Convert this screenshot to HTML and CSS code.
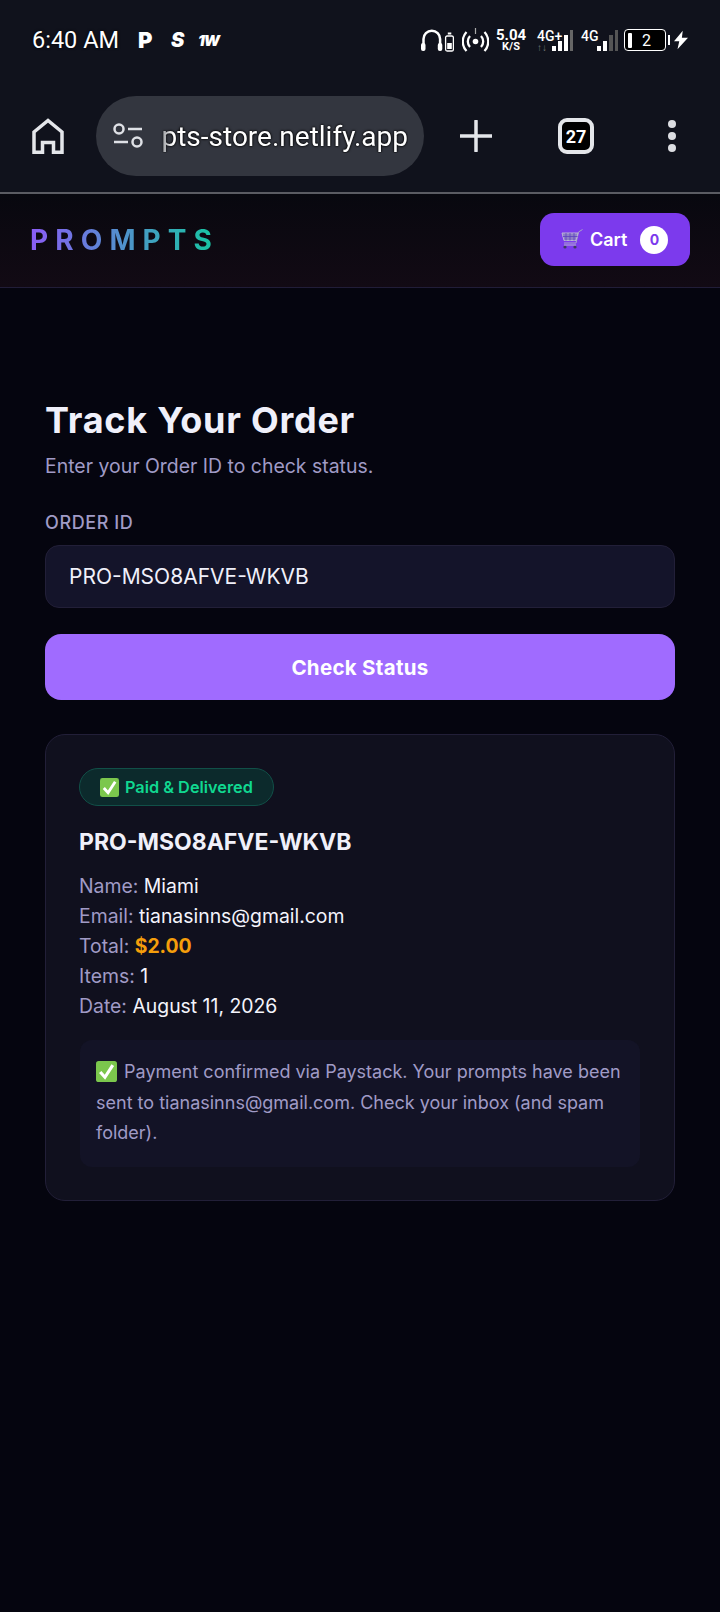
FILE: index.html
```html
<!DOCTYPE html>
<html>
<head>
	<meta name="viewport" content="width=device-width, initial-scale=1.0">
	<title>Track Your Order</title>
	<link rel="stylesheet" href="styles.css">
</head>
<body>
	<div class="phone-top">
		<div class="statusbar">
			<div class="status-left">
				<span class="time">6:40 AM</span>
				<span class="app-p">P</span>
				<span class="app-s">S</span>
				<span class="app-w">1W</span>
			</div>
			<div class="status-right">
				<svg class="ic" width="33" height="24" viewBox="0 0 33 24">
					<path d="M2.500 19V11a8.300 8.300 0 0 1 16.600 0v8" fill="none" stroke="#fff" stroke-width="2.500"/>
					<rect x="0" y="15" width="4.500" height="8" rx="2" fill="#fff"/>
					<rect x="16.800" y="15" width="4.500" height="8" rx="2" fill="#fff"/>
					<rect x="24.600" y="8" width="7.800" height="15" rx="1.500" fill="none" stroke="#fff" stroke-width="1.300"/>
					<rect x="26.800" y="4.500" width="3.500" height="2" fill="#fff"/>
					<rect x="26.200" y="15" width="4.600" height="6" fill="#fff"/>
				</svg>
				<svg class="ic hot" width="27" height="26" viewBox="0 0 27 26">
					<circle cx="13.500" cy="14.500" r="2.800" fill="#fff"/>
					<path d="M8 9a8 8 0 0 0 0 11M19 9a8 8 0 0 1 0 11M4.500 5a14 14 0 0 0 0 19M22.500 5a14 14 0 0 1 0 19" fill="none" stroke="#fff" stroke-width="2.300"/>
					<path d="M13.500 1v6" stroke="#aaa" stroke-width="1.200"/>
				</svg>
				<div class="speed"><span>5.04</span><span class="unit">K/S</span></div>
				<div class="net net-plus">
					<div class="net-text"><span>4G+</span><span class="arrows">↑↓</span></div>
					<svg width="21" height="21" viewBox="0 0 21 21">
						<rect x="0" y="16" width="4" height="5" fill="#fff"/>
						<rect x="6" y="11" width="4" height="10" fill="#fff"/>
						<rect x="12" y="5" width="4" height="16" fill="#fff"/>
						<rect x="18" y="0" width="3" height="21" fill="#666"/>
					</svg>
				</div>
				<div class="net net-plain">
					<div class="net-text"><span>4G</span></div>
					<svg width="21" height="21" viewBox="0 0 21 21">
						<rect x="0" y="16" width="4" height="5" fill="#fff"/>
						<rect x="6" y="11" width="4" height="10" fill="#fff"/>
						<rect x="12" y="5" width="4" height="16" fill="#555"/>
						<rect x="18" y="0" width="3" height="21" fill="#555"/>
					</svg>
				</div>
				<div class="battery">
					<div class="battery-body"><i></i><span>2</span></div>
					<b class="battery-cap"></b>
				</div>
				<svg class="ic bolt" width="14" height="20" viewBox="0 0 16 21"><path d="M10 0 0 12h6l-2 9 12-13H9z" fill="#fff"/></svg>
			</div>
		</div>
		<div class="toolbar">
			<svg class="home" width="32" height="36" viewBox="0 0 32 36">
				<path d="M2 34.200V14L16 2.500 30 14v20.200h-8.500v-9.700h-11v9.700z" fill="none" stroke="#e4e6ea" stroke-width="3.500"/>
			</svg>
			<div class="urlbar">
				<svg width="30" height="26" viewBox="0 0 30 26">
					<circle cx="6" cy="6" r="4.500" fill="none" stroke="#dfe1e6" stroke-width="2.500"/>
					<path d="M15 6h14M1 19h14" stroke="#dfe1e6" stroke-width="2.500"/>
					<circle cx="24" cy="19" r="4.500" fill="none" stroke="#dfe1e6" stroke-width="2.500"/>
				</svg>
				<div class="url">pts-store.netlify.app</div>
			</div>
			<svg class="plus" width="32" height="32" viewBox="0 0 32 32"><path d="M16 1v30M0 16h32" stroke="#e4e6ea" stroke-width="3.500" stroke-linecap="round"/></svg>
			<div class="tabs">27</div>
			<div class="dots"><i></i><i></i><i></i></div>
		</div>
	</div>

	<header class="site-header">
		<div class="logo">PROMPTS</div>
		<button class="cart-btn">
			<svg width="22" height="21" viewBox="0 0 22 21">
				<path d="M21.500 0.500 17.500 3 15 14H3" fill="none" stroke="#a9a2c8" stroke-width="1"/>
				<path d="M1 4h16l-2 7.500H3z" fill="#8d7fc6" stroke="#b9b3d6" stroke-width="1"/>
				<path d="M5 4v7.500M9 4v7.500M13 4v7.500M2 7.500h14.500" stroke="#5c3fc0" stroke-width="0.800"/>
				<circle cx="4" cy="18" r="1.600" fill="#3d3a60"/>
				<circle cx="14" cy="18" r="1.600" fill="#3d3a60"/>
				<path d="M3 16h12" stroke="#b9b3d6" stroke-width="1"/>
			</svg>
			<span>Cart</span>
			<span class="cart-count">0</span>
		</button>
	</header>

	<main class="page">
		<h1>Track Your Order</h1>
		<p class="sub">Enter your Order ID to check status.</p>

		<label class="field-label" for="orderid">ORDER ID</label>
		<input class="field" id="orderid" type="text" value="PRO-MSO8AFVE-WKVB">
		<button class="check-btn">Check Status</button>

		<section class="result">
			<div class="badge">
				<svg class="tick" width="19" height="19" viewBox="0 0 20 20"><rect width="20" height="20" rx="2.500" fill="#7bc74d"/><path d="M4 10.500l4.500 5L16 4" fill="none" stroke="#fff" stroke-width="3"/></svg>
				<span>Paid &amp; Delivered</span>
			</div>
			<h2>PRO-MSO8AFVE-WKVB</h2>
			<div class="details">
				<div>Name: <b>Miami</b></div>
				<div>Email: <b>tianasinns@gmail.com</b></div>
				<div>Total: <b class="price">$2.00</b></div>
				<div>Items: <b>1</b></div>
				<div>Date: <b>August 11, 2026</b></div>
			</div>
			<div class="note">
				<svg class="tick" width="21" height="21" viewBox="0 0 20 20"><rect width="20" height="20" rx="2.500" fill="#7bc74d"/><path d="M4 10.500l4.500 5L16 4" fill="none" stroke="#fff" stroke-width="3"/></svg>
				Payment confirmed via Paystack. Your prompts have been sent to tianasinns@gmail.com. Check your inbox (and spam folder).
			</div>
		</section>
	</main>
</body>
</html>
```

FILE: styles.css
```css
* {
    box-sizing: border-box;
}

body {
    margin: 0;
    width: 720px;
    height: 1612px;
    overflow: hidden;
    background-color: #05050f;
    color: #f0f0fa;
    font-family: "Inter", "Liberation Sans", sans-serif;
}

/* phone + browser chrome */
.phone-top {
    background-color: #10121c;
    height: 194px;
    border-bottom: 2px solid #5b5c63;
}

.statusbar {
    height: 80px;
    padding: 24px 32px 0 32px;
    display: flex;
    justify-content: space-between;
    font-family: "Roboto", sans-serif;
    color: #fff;
}

.status-left {
    display: flex;
    align-items: center;
    height: 32px;
}

.time {
    font-size: 23.500px;
    width: 106px;
    text-shadow: 0 0 3px #000;
}

.app-p {
    font-family: "Inter", sans-serif;
    font-weight: 900;
    font-size: 22px;
    width: 33px;
}

.app-s {
    font-family: "Inter", sans-serif;
    font-weight: 900;
    font-style: italic;
    font-size: 20px;
    width: 27px;
}

.app-w {
    font-family: "Inter", sans-serif;
    font-weight: 900;
    font-style: italic;
    font-size: 15px;
    letter-spacing: -1px;
}

.status-right {
    display: flex;
    align-items: center;
    height: 32px;
}

.hot {
    margin-left: 8px;
}

.speed {
    display: flex;
    flex-direction: column;
    align-items: center;
    margin-left: 8px;
    font-weight: 700;
    font-size: 15px;
    line-height: 14px;
    width: 28px;
}

.speed .unit {
    font-size: 11px;
    line-height: 10px;
}

.net {
    display: flex;
    align-items: flex-end;
    height: 22px;
}

.net-plus {
    margin-left: 12px;
}

.net-plain {
    margin-left: 8px;
}

.net-text {
    display: flex;
    flex-direction: column;
    align-self: flex-start;
    font-size: 14px;
    font-weight: 500;
    line-height: 14px;
    white-space: nowrap;
    width: 16px;
}

.net-plus .net-text {
    width: 15px;
}

.arrows {
    font-size: 10px;
    line-height: 9px;
    color: #777;
}

.battery {
    display: flex;
    align-items: center;
    margin-left: 6px;
}

.battery-body {
    width: 42px;
    height: 22px;
    border: 1.500px solid #fff;
    border-radius: 4px;
    padding-left: 3px;
    display: flex;
    align-items: center;
    background-color: #000;
}

.battery-body i {
    width: 4px;
    height: 15px;
    background-color: #fff;
    border-radius: 1px;
}

.battery-body span {
    font-size: 16px;
    margin-left: 10px;
}

.battery-cap {
    width: 2px;
    height: 10px;
    margin-left: 2px;
    background-color: #fff;
}

.bolt {
    margin-left: 4px;
}

.toolbar {
    display: flex;
    align-items: center;
    height: 112px;
    padding-left: 32px;
}

.urlbar {
    display: flex;
    align-items: center;
    width: 328px;
    height: 80px;
    margin-left: 32px;
    padding: 0 16px 0 17px;
    background-color: #33363f;
    border-radius: 40px;
}

.url {
    flex: 1;
    text-align: right;
    font-family: "Roboto", sans-serif;
    font-size: 28px;
    color: #fff;
    white-space: nowrap;
    text-shadow: 0 0 3px #000, 0 0 2px #000;
    -webkit-mask-image: linear-gradient(90deg, transparent 8px, #000 30px);
    mask-image: linear-gradient(90deg, transparent 8px, #000 30px);
}

.plus {
    margin-left: 36px;
}

.tabs {
    width: 36px;
    height: 36px;
    margin-left: 66px;
    border: 4px solid #e4e6ea;
    border-radius: 9px;
    background-color: #000;
    color: #fff;
    font-family: "Roboto", sans-serif;
    font-size: 18px;
    font-weight: 700;
    display: flex;
    align-items: center;
    justify-content: center;
}

.dots {
    display: flex;
    flex-direction: column;
    gap: 4px;
    margin-left: 74px;
}

.dots i {
    width: 8px;
    height: 8px;
    border-radius: 50%;
    background-color: #dcdde2;
}

/* site header */
.site-header {
    display: flex;
    justify-content: space-between;
    align-items: center;
    height: 94px;
    padding: 0 30px 2px;
    background: linear-gradient(180deg, #08080f 0%, #120a14 100%);
    border-bottom: 1px solid #211d38;
}

.logo {
    font-size: 28px;
    font-weight: 700;
    letter-spacing: 7.100px;
    background: linear-gradient(90deg, #8b5cf6 0%, #14c8a0 100%);
    -webkit-background-clip: text;
    background-clip: text;
    color: transparent;
}

.cart-btn {
    display: flex;
    align-items: center;
    width: 150px;
    height: 53px;
    padding: 0 21px;
    border: none;
    border-radius: 14px;
    background-color: #7c3aed;
    color: #fff;
    font-family: "Inter", sans-serif;
    font-size: 18px;
    font-weight: 600;
}

.cart-btn > span:first-of-type {
    margin-left: 7px;
}

.cart-count {
    width: 28px;
    height: 28px;
    margin-left: 13px;
    border-radius: 50%;
    background-color: #fff;
    color: #7c3aed;
    font-size: 14px;
    font-weight: 700;
    display: flex;
    align-items: center;
    justify-content: center;
}

/* track order */
.page {
    padding: 110px 45px 0;
}

h1 {
    margin: 0;
    font-size: 36px;
    font-weight: 700;
    line-height: 44px;
    letter-spacing: 0.750px;
    color: #f0f0fa;
}

.sub {
    margin: 13px 0 0;
    font-size: 19.450px;
    line-height: 23px;
    color: #a09bc6;
}

.field-label {
    display: block;
    margin-top: 35px;
    font-size: 18px;
    font-weight: 500;
    line-height: 20px;
    letter-spacing: 0.600px;
    color: #a09bc6;
}

.field {
    display: block;
    width: 100%;
    height: 63px;
    margin-top: 12px;
    padding: 0 23px;
    background-color: #14142a;
    border: 1px solid #221f38;
    border-radius: 14px;
    color: #f0f0fa;
    font-family: "Inter", sans-serif;
    font-size: 21px;
}

.check-btn {
    display: block;
    width: 100%;
    height: 66px;
    margin-top: 26px;
    border: none;
    border-radius: 16px;
    background-color: #a06bff;
    color: #fff;
    font-family: "Inter", sans-serif;
    font-size: 20.500px;
    font-weight: 700;
    letter-spacing: 0.300px;
}

.result {
    margin-top: 34px;
    height: 467px;
    padding: 33px 33px 0;
    background-color: #10101e;
    border: 1px solid #221f38;
    border-radius: 20px;
}

.badge {
    display: inline-flex;
    align-items: center;
    gap: 6px;
    height: 38px;
    padding: 0 20px;
    background-color: #0c2a2c;
    border: 1px solid #115048;
    border-radius: 19px;
    color: #10d890;
    font-size: 16.300px;
    font-weight: 600;
}

.result h2 {
    margin: 21px 0 0;
    font-size: 23px;
    font-weight: 700;
    line-height: 30px;
    color: #f0f0fa;
}

.details {
    margin-top: 14px;
    font-size: 19.400px;
    line-height: 30px;
    color: #a09bc6;
}

.details b {
    font-weight: 400;
    color: #f4f4fc;
}

.details .price {
    font-weight: 700;
    color: #f59e0b;
}

.note {
    height: 127px;
    margin: 19px 1px 0;
    padding: 17px 16px 0;
    background-color: #131326;
    border-radius: 12px;
    font-size: 18px;
    line-height: 30.500px;
    color: #a09bc6;
}

.note .tick {
    vertical-align: -4px;
    margin-right: 2px;
}
```
